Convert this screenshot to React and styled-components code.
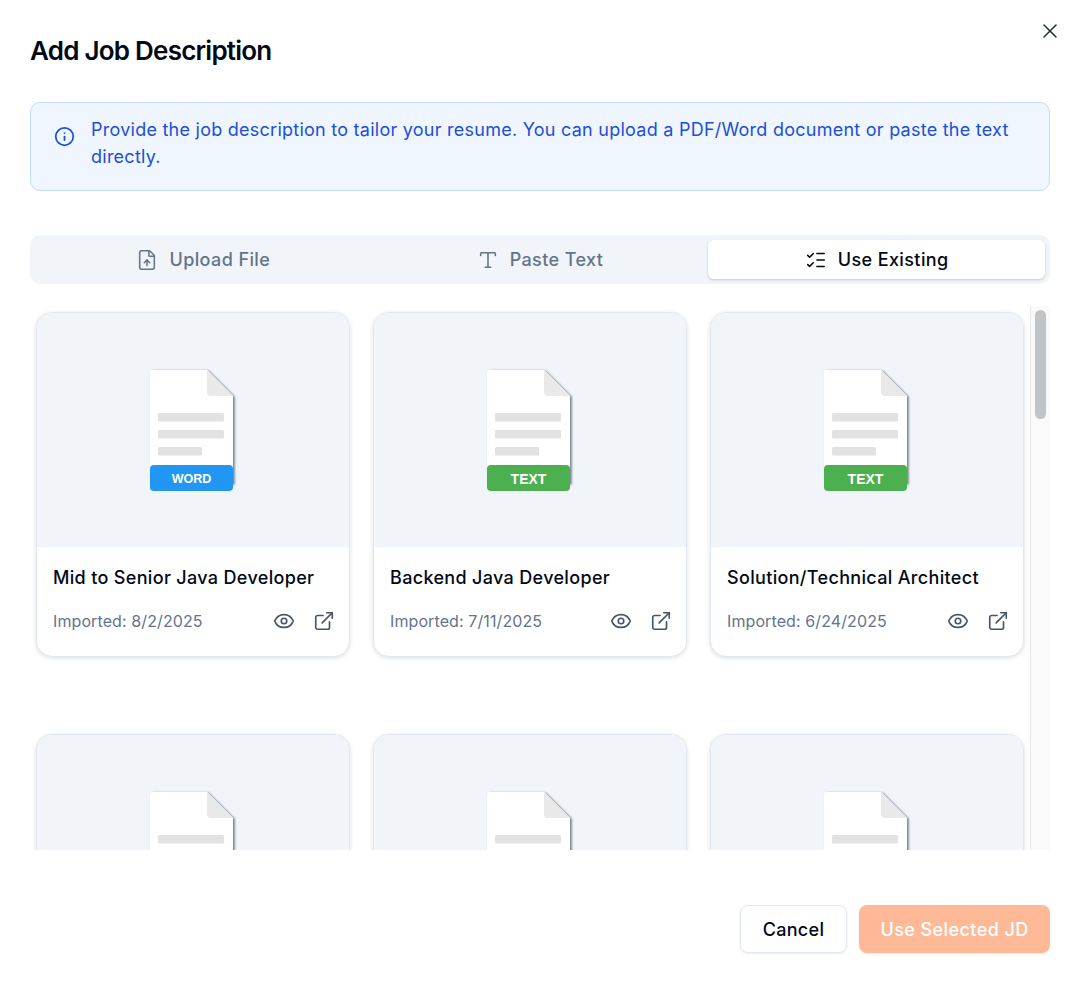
import React from "react";
import styled, { createGlobalStyle } from "styled-components";
import { ExternalLink, Eye, FileUp, Info, ListChecks, Type, X } from "lucide-react";

const GlobalStyle = createGlobalStyle`
  * { box-sizing: border-box; }
  html, body { margin: 0; padding: 0; background: #fff; }
  body { font-family: Inter, "Liberation Sans", sans-serif; color: #020817; }
`;

// second row sits below the fold, only the top of its previews shows
const jobs = [
  { id: 1, title: "Mid to Senior Java Developer", date: "8/2/2025", kind: "WORD" },
  { id: 2, title: "Backend Java Developer", date: "7/11/2025", kind: "TEXT" },
  { id: 3, title: "Solution/Technical Architect", date: "6/24/2025", kind: "TEXT" },
  { id: 4 },
  { id: 5 },
  { id: 6 },
];

const FileArt = () => (
  <svg width="96" height="132" viewBox="0 0 96 132" aria-hidden="true">
    <defs>
      <filter id="docShadow" x="-10%" y="-10%" width="125%" height="120%">
        <feDropShadow dx="1.6" dy="0.8" stdDeviation="0.8" floodColor="#4b5563" floodOpacity="0.8" />
      </filter>
    </defs>
    <path d="M5 9a3 3 0 0 1 3-3h54l26 26v88H5z" fill="#fff" filter="url(#docShadow)" />
    <path d="M62 6l26 26H66a4 4 0 0 1-4-4z" fill="#e9e9e9" />
    <rect x="13" y="49" width="66" height="8.5" rx="1.5" fill="#e2e2e2" />
    <rect x="13" y="66" width="66" height="8.5" rx="1.5" fill="#e2e2e2" />
    <rect x="13" y="83" width="44" height="8.5" rx="1.5" fill="#e2e2e2" />
  </svg>
);

const App = () => (
  <Dialog>
    <GlobalStyle />
    <CloseButton aria-label="Close">
      <X size={24} strokeWidth={1.5} />
    </CloseButton>
    <Title>Add Job Description</Title>
    <Notice>
      <NoticeIcon>
        <Info size={21} strokeWidth={2} />
      </NoticeIcon>
      <NoticeText>
        Provide the job description to tailor your resume. You can upload a
        PDF/Word document or paste the text directly.
      </NoticeText>
    </Notice>
    <Tabs>
      <Tab>
        <FileUp size={22} strokeWidth={1.7} /> Upload File
      </Tab>
      <Tab>
        <Type size={22} strokeWidth={1.7} /> Paste Text
      </Tab>
      <Tab $active>
        <ListChecks size={22} strokeWidth={1.7} /> Use Existing
      </Tab>
    </Tabs>
    <Scroller>
      <CardGrid>
        {jobs.map((job) => (
          <Card key={job.id}>
            <Preview>
              <FileBadge>
                <FileArt />
                {job.kind && <KindLabel $kind={job.kind}>{job.kind}</KindLabel>}
              </FileBadge>
            </Preview>
            {job.title && (
              <CardBody>
                <CardTitle>{job.title}</CardTitle>
                <CardMeta>
                  <ImportedAt>Imported: {job.date}</ImportedAt>
                  <CardActions>
                    <Eye size={22} strokeWidth={1.8} />
                    <ExternalLink size={22} strokeWidth={1.8} />
                  </CardActions>
                </CardMeta>
              </CardBody>
            )}
          </Card>
        ))}
      </CardGrid>
      <ScrollTrack>
        <ScrollThumb />
      </ScrollTrack>
    </Scroller>
    <Footer>
      <CancelButton>Cancel</CancelButton>
      <PrimaryButton>Use Selected JD</PrimaryButton>
    </Footer>
  </Dialog>
);

export default App;

const Dialog = styled.div`
  position: relative;
  width: 1080px;
  height: 983px;
  padding: 30px 30px 0;
  background: #fff;
  overflow: hidden;
`;
const CloseButton = styled.button`
  position: absolute;
  top: 19px;
  right: 18px;
  display: flex;
  padding: 0;
  border: 0;
  background: none;
  color: #1e293b;
`;
const Title = styled.h2`
  margin: 0;
  height: 42px;
  font-size: 26px;
  line-height: 42px;
  font-weight: 600;
  letter-spacing: -0.77px;
  color: #020817;
`;
const Notice = styled.div`
  display: flex;
  gap: 16px;
  height: 89px;
  margin-top: 30px;
  padding: 13px 23px;
  background: #eff6ff;
  border: 1px solid #bfdbfe;
  border-radius: 10px;
`;
const NoticeIcon = styled.div`
  display: flex;
  flex-shrink: 0;
  padding-top: 10px;
  color: #1d4ed8;
`;
const NoticeText = styled.p`
  margin: 0;
  font-size: 18px;
  line-height: 27px;
  letter-spacing: 0.25px;
  color: #1d4ed8;
`;
const Tabs = styled.div`
  display: grid;
  grid-template-columns: repeat(3, 1fr);
  height: 49px;
  margin-top: 44px;
  padding: 5px;
  background: #f1f5f9;
  border-radius: 10px;
`;
const Tab = styled.div`
  display: flex;
  align-items: center;
  justify-content: center;
  gap: 11px;
  font-size: 18px;
  font-weight: 450;
  letter-spacing: 0.4px;
  border-radius: 6px;
  color: ${({ $active }) => ($active ? "#020817" : "#64748b")};
  background: ${({ $active }) => ($active ? "#fff" : "transparent")};
  box-shadow: ${({ $active }) =>
    $active ? "0 1px 3px rgba(0,0,0,0.12), 0 1px 2px rgba(0,0,0,0.08)" : "none"};
`;
const Scroller = styled.div`
  display: flex;
  height: 544px;
  margin-top: 22px;
  overflow: hidden;
`;
const CardGrid = styled.div`
  flex: 1;
  display: grid;
  grid-template-columns: repeat(3, 314px);
  grid-auto-rows: 345px;
  column-gap: 23px;
  row-gap: 77px;
  padding: 6px;
  align-content: start;
`;
const ScrollTrack = styled.div`
  flex: 0 0 20px;
  padding: 4px 4px 0 4px;
  background: #fafafa;
  border-left: 1px solid #e8e8e8;
`;
const ScrollThumb = styled.div`
  height: 109px;
  background: #c1c4c7;
  border-radius: 6px;
`;
const Card = styled.div`
  background: #fff;
  border: 1px solid #e2e8f0;
  border-radius: 16px;
  overflow: hidden;
  box-shadow: 0 1px 4px rgba(15, 23, 42, 0.14);
`;
const Preview = styled.div`
  display: flex;
  justify-content: center;
  height: 234px;
  padding-top: 51px;
  background: #f1f5f9;
`;
const FileBadge = styled.div`
  position: relative;
  width: 96px;
  height: 132px;
`;
const KindLabel = styled.div`
  position: absolute;
  left: 5px;
  bottom: 5px;
  width: 83px;
  height: 26px;
  padding-top: 2px;
  border-radius: 4px;
  display: flex;
  align-items: center;
  justify-content: center;
  font-family: "Liberation Sans", Arial, sans-serif;
  font-weight: 700;
  font-size: ${({ $kind }) => ($kind === "WORD" ? "12.5px" : "14px")};
  color: #fff;
  background: ${({ $kind }) => ($kind === "WORD" ? "#2196f3" : "#4caf50")};
`;
const CardBody = styled.div`
  padding: 19px 14px 0 16px;
`;
const CardTitle = styled.div`
  font-size: 18px;
  line-height: 24px;
  font-weight: 450;
  letter-spacing: 0.33px;
  color: #020817;
  white-space: nowrap;
`;
const CardMeta = styled.div`
  display: flex;
  align-items: center;
  justify-content: space-between;
  margin-top: 20px;
`;
const ImportedAt = styled.span`
  font-size: 16px;
  letter-spacing: 0.1px;
  color: #64748b;
`;
const CardActions = styled.div`
  display: flex;
  gap: 18px;
  color: #475569;
`;
const Footer = styled.div`
  display: flex;
  justify-content: flex-end;
  gap: 12px;
  margin-top: 55px;
`;
const CancelButton = styled.button`
  width: 107px;
  height: 48px;
  font: 450 18px Inter, sans-serif;
  letter-spacing: 0.3px;
  color: #020817;
  background: #fff;
  border: 1px solid #e2e8f0;
  border-radius: 8px;
  box-shadow: 0 1px 2px rgba(15, 23, 42, 0.08);
`;
const PrimaryButton = styled.button`
  width: 191px;
  height: 48px;
  font: 450 18px Inter, sans-serif;
  letter-spacing: 0.42px;
  color: #fff;
  background: #ffb997;
  border: 0;
  border-radius: 8px;
  box-shadow: 0 1px 2px rgba(15, 23, 42, 0.08);
`;
